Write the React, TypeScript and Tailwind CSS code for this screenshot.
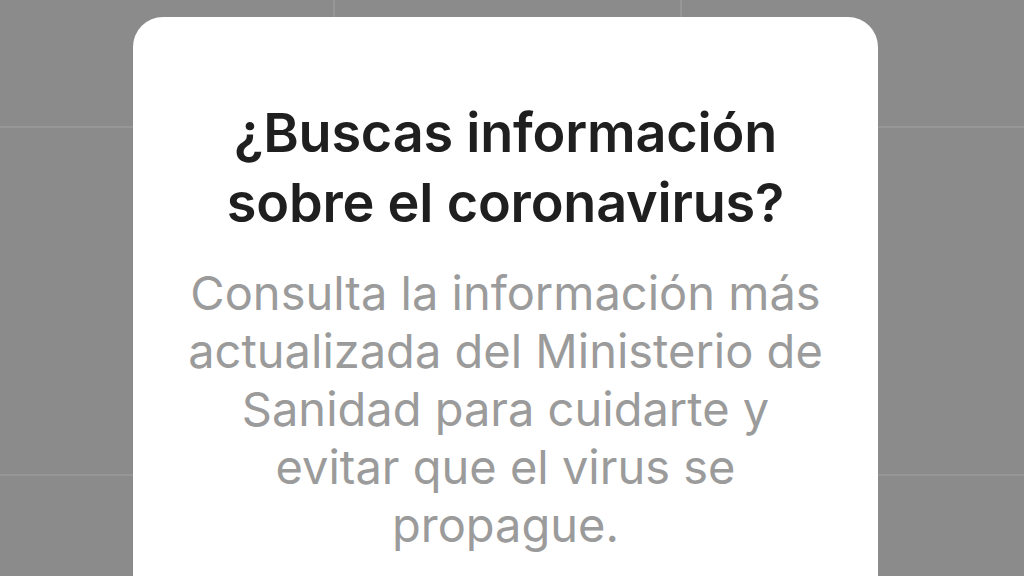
export default function App() {
  return (
    <div className="h-[576px] w-[1024px] overflow-hidden bg-[#8b8b8b] bg-[linear-gradient(to_right,#979797_2px,transparent_2px),linear-gradient(to_bottom,#979797_2px,transparent_2px)] bg-[size:347px_348px] bg-[position:333px_126px] pt-[17px] font-['Inter',sans-serif]">
      <div className="mx-[133px] h-[620px] w-[745px] rounded-[30px] bg-white px-[30px] pt-[81px] text-center">
        <h2 className="text-[54px] font-semibold leading-[70px] tracking-[-0.2px] text-[#1f1f1f]">
          ¿Buscas información
          <br />
          sobre el coronavirus?
        </h2>
        <p className="mt-[26px] text-[47px] font-normal leading-[58px] text-[#9b9b9b]">
          Consulta la información más
          <br />
          actualizada del Ministerio de
          <br />
          Sanidad para cuidarte y
          <br />
          evitar que el virus se
          <br />
          propague.
        </p>
      </div>
    </div>
  );
}
